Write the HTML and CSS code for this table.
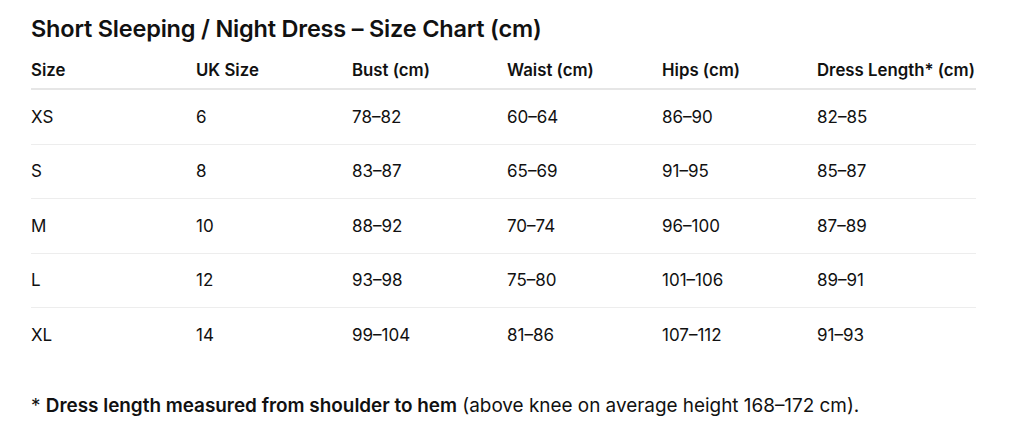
FILE: index.html
```html
<!DOCTYPE html>
<html>
<head>
<meta charset="utf-8">
<link rel="stylesheet" href="styles.css">
</head>
<body>
<div class="page">
  <h1 class="title">Short Sleeping / Night Dress – Size Chart (cm)</h1>
  <table class="chart">
    <thead>
      <tr><th>Size</th><th>UK Size</th><th>Bust (cm)</th><th>Waist (cm)</th><th>Hips (cm)</th><th>Dress Length* (cm)</th></tr>
    </thead>
    <tbody>
      <tr><td>XS</td><td>6</td><td>78–82</td><td>60–64</td><td>86–90</td><td>82–85</td></tr>
      <tr><td>S</td><td>8</td><td>83–87</td><td>65–69</td><td>91–95</td><td>85–87</td></tr>
      <tr><td>M</td><td>10</td><td>88–92</td><td>70–74</td><td>96–100</td><td>87–89</td></tr>
      <tr><td>L</td><td>12</td><td>93–98</td><td>75–80</td><td>101–106</td><td>89–91</td></tr>
      <tr><td>XL</td><td>14</td><td>99–104</td><td>81–86</td><td>107–112</td><td>91–93</td></tr>
    </tbody>
  </table>
  <p class="note">* <strong>Dress length measured from shoulder to hem</strong> (above knee on average height 168–172 cm).</p>
</div>
</body>
</html>
```
FILE: styles.css
```css
html, body { margin: 0; padding: 0; background: #fff; }
body { font-family: Inter, "Noto Sans", sans-serif; color: #111; }
.page { padding: 14px 40px 0 31px; }
.title { margin: 0; font-size: 23.5px; font-weight: 600; line-height: 30px; letter-spacing: -0.2px; }
.chart { border-collapse: collapse; width: 945px; margin-top: 8px; font-size: 17px; }
.chart th, .chart td { text-align: left; padding: 0; white-space: nowrap; }
.chart th { font-weight: 600; font-size: 16.8px; height: 36px; vertical-align: middle; border-bottom: 2px solid #e6e6e6; }
.chart td { height: 53.5px; border-bottom: 1px solid #ededed; vertical-align: middle; }
.chart tbody tr:last-child td { border-bottom: none; }
.chart th:nth-child(1) { width: 165px; }
.chart th:nth-child(2) { width: 156px; }
.chart th:nth-child(3) { width: 155px; }
.chart th:nth-child(4) { width: 155px; }
.chart th:nth-child(5) { width: 155px; }
.chart th:nth-child(6) { width: 159px; }
.note { margin: 32px 0 0; font-size: 18.9px; white-space: nowrap; }
.note strong { font-weight: 600; }
```
